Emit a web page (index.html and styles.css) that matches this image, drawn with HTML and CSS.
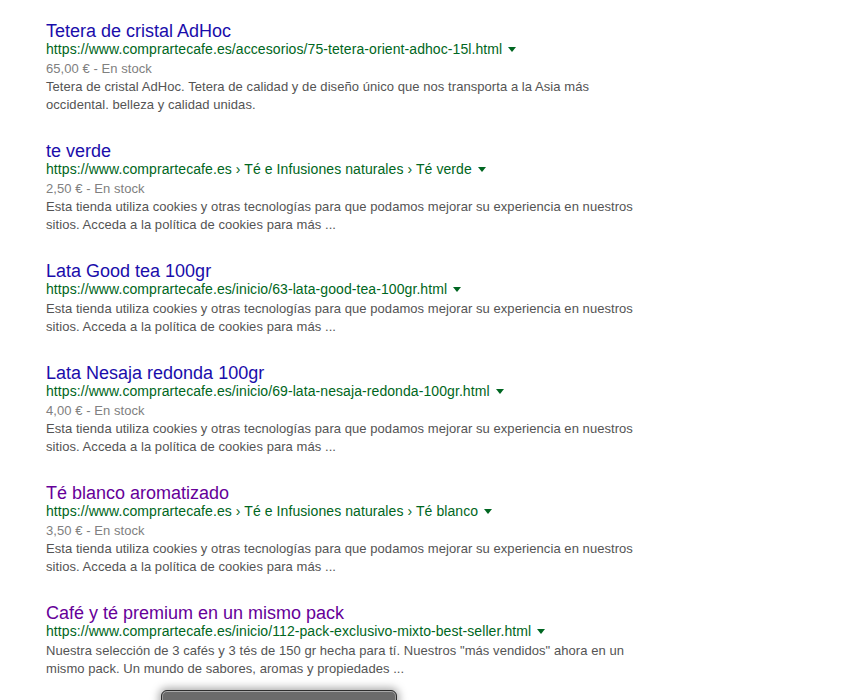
FILE: index.html
```html
<!DOCTYPE html>
<html lang="es">
<head>
<meta charset="utf-8">
<title>Resultados</title>
<link rel="stylesheet" href="styles.css">
</head>
<body>
<main class="results">
  <div class="result">
    <a class="title" href="#">Tetera de cristal AdHoc</a>
    <div class="url">https://www.comprartecafe.es/accesorios/75-tetera-orient-adhoc-15l.html <span class="arrow"></span></div>
    <div class="meta">65,00 € - En stock</div>
    <div class="snippet">Tetera de cristal AdHoc. Tetera de calidad y de diseño único que nos transporta a la Asia más occidental. belleza y calidad unidas.</div>
  </div>
  <div class="result">
    <a class="title" href="#">te verde</a>
    <div class="url">https://www.comprartecafe.es › Té e Infusiones naturales › Té verde <span class="arrow"></span></div>
    <div class="meta">2,50 € - En stock</div>
    <div class="snippet">Esta tienda utiliza cookies y otras tecnologías para que podamos mejorar su experiencia en nuestros sitios. Acceda a la política de cookies para más ...</div>
  </div>
  <div class="result">
    <a class="title" href="#">Lata Good tea 100gr</a>
    <div class="url">https://www.comprartecafe.es/inicio/63-lata-good-tea-100gr.html <span class="arrow"></span></div>
    <div class="snippet">Esta tienda utiliza cookies y otras tecnologías para que podamos mejorar su experiencia en nuestros sitios. Acceda a la política de cookies para más ...</div>
  </div>
  <div class="result">
    <a class="title" href="#">Lata Nesaja redonda 100gr</a>
    <div class="url">https://www.comprartecafe.es/inicio/69-lata-nesaja-redonda-100gr.html <span class="arrow"></span></div>
    <div class="meta">4,00 € - En stock</div>
    <div class="snippet">Esta tienda utiliza cookies y otras tecnologías para que podamos mejorar su experiencia en nuestros sitios. Acceda a la política de cookies para más ...</div>
  </div>
  <div class="result">
    <a class="title visited" href="#">Té blanco aromatizado</a>
    <div class="url">https://www.comprartecafe.es › Té e Infusiones naturales › Té blanco <span class="arrow"></span></div>
    <div class="meta">3,50 € - En stock</div>
    <div class="snippet">Esta tienda utiliza cookies y otras tecnologías para que podamos mejorar su experiencia en nuestros sitios. Acceda a la política de cookies para más ...</div>
  </div>
  <div class="result">
    <a class="title visited" href="#">Café y té premium en un mismo pack</a>
    <div class="url">https://www.comprartecafe.es/inicio/112-pack-exclusivo-mixto-best-seller.html <span class="arrow"></span></div>
    <div class="snippet">Nuestra selección de 3 cafés y 3 tés de 150 gr hecha para tí. Nuestros "más vendidos" ahora en un mismo pack. Un mundo de sabores, aromas y propiedades ...</div>
  </div>
</main>
<div class="popup"></div>
</body>
</html>
```
FILE: styles.css
```css
html, body {
  margin: 0;
  padding: 0;
  background: #fff;
  overflow: hidden;
  height: 700px;
}
body {
  font-family: "Liberation Sans", Arial, sans-serif;
  position: relative;
}
.results {
  padding: 21px 0 0 46px;
  width: 592px;
  display: flex;
  flex-direction: column;
  gap: 27px;
}
.result {
  display: flex;
  flex-direction: column;
}
.title {
  font-size: 18px;
  line-height: 20px;
  color: #1a0dab;
  text-decoration: none;
  align-self: flex-start;
}
.title.visited {
  color: #660099;
}
.url {
  font-size: 14px;
  line-height: 16px;
  color: #006621;
  white-space: nowrap;
  letter-spacing: 0.08px;
}
.arrow {
  display: inline-block;
  width: 0;
  height: 0;
  border-left: 4px solid transparent;
  border-right: 4px solid transparent;
  border-top: 5px solid #006621;
  vertical-align: middle;
  margin-left: 2px;
  margin-top: -2px;
}
.meta {
  font-size: 13px;
  line-height: 18px;
  color: #808080;
  padding-top: 3px;
  letter-spacing: 0.06px;
}
.snippet {
  font-size: 13px;
  line-height: 18px;
  color: #545454;
  letter-spacing: 0.06px;
}
.url + .snippet {
  padding-top: 3px;
}
.popup {
  position: absolute;
  left: 161px;
  top: 690px;
  width: 234px;
  height: 40px;
  background: #6b6b6b;
  border: 1px solid #2e2e2e;
  border-radius: 6px;
  box-shadow: inset 0 1px 0 #a8a8a8, inset 1px 0 0 #9a9a9a, inset -1px 0 0 #9a9a9a, 0 0 8px 2px rgba(0,0,0,0.35);
}
```
